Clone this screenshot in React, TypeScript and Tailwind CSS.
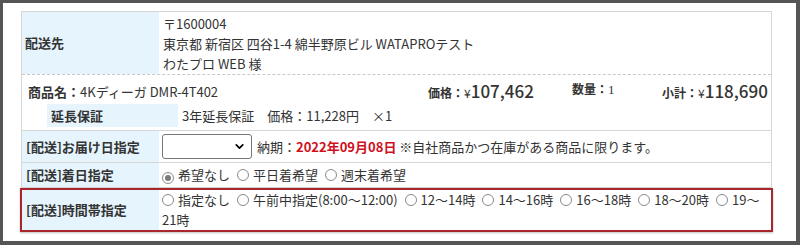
import React from 'react';
import { ChevronDown } from 'lucide-react';

const Radio = ({ checked = false }: { checked?: boolean }) => (
  <span className="inline-flex items-center justify-center w-[12px] h-[12px] rounded-full border border-[#8a8a8a] bg-white align-[-1px] mr-[4px]">
    {checked && <span className="w-[6px] h-[6px] rounded-full bg-[#7a7a7a]" />}
  </span>
);

const Option = ({ label, checked = false }: { label: string; checked?: boolean }) => (
  <>
    <Radio checked={checked} />
    {label}
    <span className="inline-block w-[7px]" />
  </>
);

const timeSlots = ['指定なし', '午前中指定(8:00〜12:00)', '12〜14時', '14〜16時', '16〜18時', '18〜20時'];

export default function App() {
  return (
    <div className="w-[800px] h-[245px] bg-[#555] pt-[3px] pl-[3px] pr-[4px] pb-[4px] font-['Noto_Sans_CJK_JP',sans-serif] text-[13px] text-[#333]">
      <div className="bg-white h-full pl-[18px] pt-[8px]">
        <div className="w-[751px] border-x border-t border-[#d6d6d6]">
          {/* 配送先 */}
          <div className="flex h-[63px] border-b border-dashed border-[#c8c8c8]">
            <div className="w-[137px] bg-[#e6f5fd] flex items-center pl-[3px] font-bold">配送先</div>
            <div className="pl-[4px] pt-[2px] leading-[20px]">
              <div>〒1600004</div>
              <div>東京都 新宿区 四谷1-4 綿半野原ビル WATAPROテスト</div>
              <div>わたプロ WEB 様</div>
            </div>
          </div>

          {/* 商品 */}
          <div className="border-b border-[#d6d6d6] pt-[6px] pb-[3px]">
            <div className="grid grid-cols-[400px_144px_90px_1fr] pl-[6px] pr-[6px] h-[20px] items-center leading-[20px]">
              <div>
                <span className="font-bold">商品名：</span>4Kディーガ DMR-4T402
              </div>
              <div className="whitespace-nowrap">
                <span className="font-bold text-[12px]">価格：</span>
                <span className="text-[12px]">¥</span>
                <span className="text-[17px] font-medium">107,462</span>
              </div>
              <div className="whitespace-nowrap -mt-[6px]">
                <span className="font-bold text-[12px]">数量：</span>
                <span className="font-['Liberation_Serif',serif] text-[13px]">1</span>
              </div>
              <div className="whitespace-nowrap text-right">
                <span className="font-bold text-[12px]">小計：</span>
                <span className="text-[12px]">¥</span>
                <span className="text-[17px] font-medium">118,690</span>
              </div>
            </div>
            <div className="flex mt-[3px] ml-[25px] h-[23px] items-center">
              <div className="w-[131px] h-full bg-[#e6f5fd] flex items-center pl-[4px] font-bold">延長保証</div>
              <div className="pl-[4px]">3年延長保証　価格：11,228円　×1</div>
            </div>
          </div>

          {/* お届け日指定 */}
          <div className="flex h-[32px] border-b border-[#d6d6d6]">
            <div className="w-[137px] bg-[#e6f5fd] flex items-center pl-[4px] font-bold">[配送]お届け日指定</div>
            <div className="flex items-center pl-[3px] whitespace-pre">
              <div className="w-[90px] h-[25px] border border-[#777] rounded-[3px] flex items-center justify-end pr-[5px] bg-white">
                <ChevronDown className="w-[13px] h-[13px] text-black" strokeWidth={3.2} />
              </div>
              <span className="ml-[5px]">納期：</span>
              <span className="font-bold text-[#d0101b]">2022年09月08日</span>
              <span> ※自社商品かつ在庫がある商品に限ります。</span>
            </div>
          </div>

          {/* 着日指定 */}
          <div className="flex h-[25px] border-b border-[#d6d6d6]">
            <div className="w-[137px] bg-[#e6f5fd] flex items-center pl-[4px] font-bold">[配送]着日指定</div>
            <div className="flex items-center pl-[3px] leading-[20px]">
              <div>
                <Option label="希望なし" checked />
                <Option label="平日着希望" />
                <Option label="週末着希望" />
              </div>
            </div>
          </div>

          {/* 時間帯指定 */}
          <div className="flex -mx-[2px] border-2 border-[#a8262c] shadow-[0_1px_2px_rgba(0,0,0,0.25)]">
            <div className="w-[137px] shrink-0 bg-[#e6f5fd] flex items-center pl-[4px] font-bold">[配送]時間帯指定</div>
            <div className="flex-1 pl-[3px] pr-[2px] leading-[20px]">
              {timeSlots.map(s => (
                <Option key={s} label={s} />
              ))}
              <Radio />
              19〜<wbr />21時
            </div>
          </div>
        </div>
      </div>
    </div>
  );
}
